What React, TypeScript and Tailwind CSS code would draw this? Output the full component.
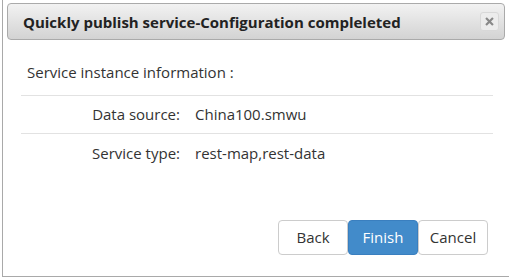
import React from "react";

function Row({ label, value }: { label: string; value: string }) {
  return (
    <div className="flex h-[38px] items-center border-b border-[#e2e2e2] last:border-b-0">
      <div className="w-[159px] text-right">{label}</div>
      <div className="pl-[15px]">{value}</div>
    </div>
  );
}

export default function App() {
  return (
    <div
      className="h-[278px] w-[509px] overflow-hidden bg-white text-[15px] text-[#333]"
      style={{ fontFamily: '"Open Sans", "Noto Sans", sans-serif' }}
    >
      <div className="ml-[2px] flex h-[277px] flex-col border-b border-l border-[#a9a9a9]">
        {/* Header */}
        <div className="mx-[4px] mt-[3px] flex h-[37px] items-center justify-between rounded-[4px] border border-[#aaaaaa] bg-gradient-to-b from-[#f2f2f2] to-[#d3d3d3] pl-[15px] pr-[5px]">
          <h3 className="pt-[1px] text-[15px] font-bold text-[#222]">
            Quickly publish service-Configuration compleleted
          </h3>
          <button className="flex h-[19px] w-[19px] items-center justify-center rounded-[3px] border border-[#d8d8d8] bg-[#ececec]">
            <svg width="9" height="9" viewBox="0 0 10 10">
              <path d="M2 2 L8 8 M8 2 L2 8" stroke="#888" strokeWidth="2.4" strokeLinecap="square" />
            </svg>
          </button>
        </div>

        {/* Body */}
        <div className="ml-[18px] mr-[16px] mt-[14px]">
          <div className="flex h-[42px] items-center border-b border-[#e2e2e2] pl-[6px] pb-[4px]">
            Service instance information :
          </div>
          <Row label="Data source:" value="China100.smwu" />
          <Row label="Service type:" value="rest-map,rest-data" />
        </div>

        {/* Footer */}
        <div className="mt-auto mb-[21px] flex justify-end pr-[21px]">
          <button className="h-[35px] w-[70px] rounded-[4px] border border-[#cccccc] bg-white text-[#333]">
            Back
          </button>
          <button className="h-[35px] w-[70px] rounded-[4px] border border-[#3a7fbf] bg-[#428bca] text-white">
            Finish
          </button>
          <button className="h-[35px] w-[70px] rounded-[4px] border border-[#cccccc] bg-white text-[#333]">
            Cancel
          </button>
        </div>
      </div>
    </div>
  );
}
